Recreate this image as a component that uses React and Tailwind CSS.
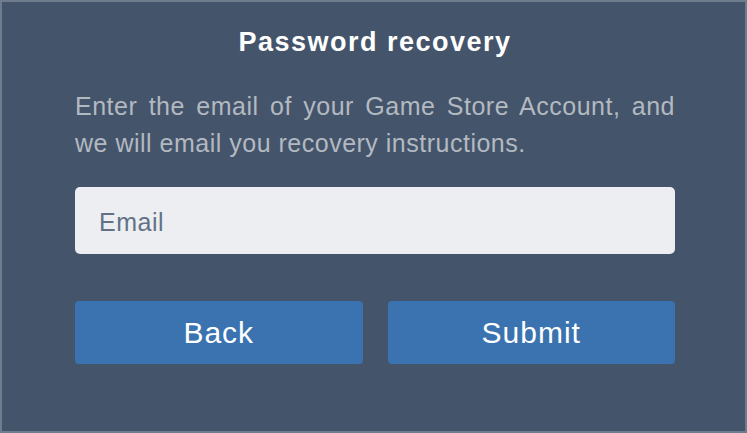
export default function App() {
  return (
    <div
      className="w-[747px] h-[433px] border-2 border-[#6f7c8d] bg-[#44546a] flex flex-col items-start"
      style={{ fontFamily: '"Liberation Sans", Arial, sans-serif' }}
    >
      <div className="ml-[73px] w-[600px] flex flex-col">
        <h1 className="mt-[24px] h-[32px] leading-[32px] text-center text-[27px] font-bold text-white tracking-[1.5px]">
          Password recovery
        </h1>
        <p className="mt-[30px] text-[25px] leading-[37px] text-[#b3b9c1] text-justify tracking-[0.5px]">
          Enter the email of your Game Store Account, and we will email you recovery instructions.
        </p>
        <input
          type="text"
          placeholder="Email"
          className="mt-[25px] h-[67px] w-full rounded-[5px] bg-[#eceef1] pl-[24px] pr-[23px] pt-[4px] text-[25px] tracking-[0.5px] text-[#2f3b4a] placeholder:text-[#617288] outline-none"
        />
        <div className="mt-[47px] flex gap-[25px]">
          <button className="flex-1 h-[63px] rounded-[4px] bg-[#3a73af] text-white text-[30px] tracking-[1px]">
            Back
          </button>
          <button className="flex-1 h-[63px] rounded-[4px] bg-[#3a73af] text-white text-[30px] tracking-[1px]">
            Submit
          </button>
        </div>
      </div>
    </div>
  );
}
